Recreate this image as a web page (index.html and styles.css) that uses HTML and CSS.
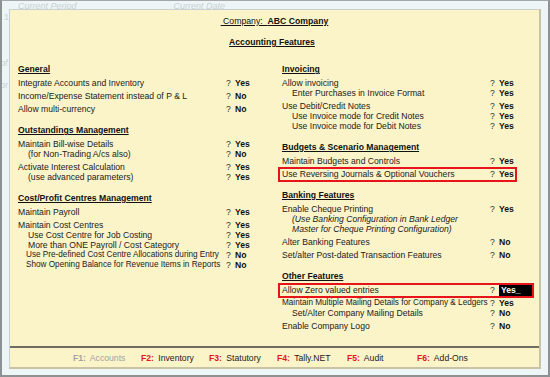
FILE: index.html
```html
<!DOCTYPE html>
<html lang="en">
<head>
  <meta charset="UTF-8">
  <title>Accounting Features</title>
  <link rel="stylesheet" href="styles.css">
</head>
<body>
  <div class="frame">
    <!-- faded screen behind the dialog -->
    <div class="behind-top">
      <span class="bt-period">Current Period</span>
      <span class="bt-date">Current Date</span>
    </div>

    <div class="middle">
      <div class="behind-left">
        <span class="bl-one">1</span>
        <span class="bl-of">of</span>
        <span class="bl-or">or</span>
      </div>

      <div class="panel">
        <div class="content">
          <div class="company"><span>&nbsp;Company:&nbsp; <b>ABC Company</b></span></div>
          <div class="title">Accounting Features</div>

          <div class="columns">
            <!-- Left column -->
            <div class="col">
              <div class="sec">
                <h3>General</h3>
                <div class="grp">
                  <div class="row"><span class="lbl">Integrate Accounts and Inventory</span><span class="q">?</span><span class="val">Yes</span></div>
                </div>
                <div class="grp">
                  <div class="row"><span class="lbl">Income/Expense Statement instead of P &amp; L</span><span class="q">?</span><span class="val">No</span></div>
                </div>
                <div class="grp">
                  <div class="row"><span class="lbl">Allow multi-currency</span><span class="q">?</span><span class="val">No</span></div>
                </div>
              </div>

              <div class="sec">
                <h3>Outstandings Management</h3>
                <div class="grp">
                  <div class="row"><span class="lbl">Maintain Bill-wise Details</span><span class="q">?</span><span class="val">Yes</span></div>
                  <div class="row sub"><span class="lbl">(for Non-Trading A/cs also)</span><span class="q">?</span><span class="val">No</span></div>
                </div>
                <div class="grp">
                  <div class="row"><span class="lbl">Activate Interest Calculation</span><span class="q">?</span><span class="val">Yes</span></div>
                  <div class="row sub"><span class="lbl">(use advanced parameters)</span><span class="q">?</span><span class="val">Yes</span></div>
                </div>
              </div>

              <div class="sec">
                <h3>Cost/Profit Centres Management</h3>
                <div class="grp">
                  <div class="row"><span class="lbl">Maintain Payroll</span><span class="q">?</span><span class="val">Yes</span></div>
                </div>
                <div class="grp">
                  <div class="row"><span class="lbl">Maintain Cost Centres</span><span class="q">?</span><span class="val">Yes</span></div>
                  <div class="row sub"><span class="lbl">Use Cost Centre for Job Costing</span><span class="q">?</span><span class="val">Yes</span></div>
                  <div class="row sub"><span class="lbl">More than ONE Payroll / Cost Category</span><span class="q">?</span><span class="val">Yes</span></div>
                  <div class="row sub sm"><span class="lbl">Use Pre-defined Cost Centre Allocations during Entry</span><span class="q">?</span><span class="val">No</span></div>
                  <div class="row sub sm"><span class="lbl">Show Opening Balance for Revenue Items in Reports</span><span class="q">?</span><span class="val">No</span></div>
                </div>
              </div>
            </div>

            <!-- Right column -->
            <div class="col">
              <div class="sec">
                <h3>Invoicing</h3>
                <div class="grp">
                  <div class="row"><span class="lbl">Allow invoicing</span><span class="q">?</span><span class="val">Yes</span></div>
                  <div class="row sub"><span class="lbl">Enter Purchases in Invoice Format</span><span class="q">?</span><span class="val">Yes</span></div>
                </div>
                <div class="grp">
                  <div class="row"><span class="lbl">Use Debit/Credit Notes</span><span class="q">?</span><span class="val">Yes</span></div>
                  <div class="row sub"><span class="lbl">Use Invoice mode for Credit Notes</span><span class="q">?</span><span class="val">Yes</span></div>
                  <div class="row sub"><span class="lbl">Use Invoice mode for Debit Notes</span><span class="q">?</span><span class="val">Yes</span></div>
                </div>
              </div>

              <div class="sec">
                <h3>Budgets &amp; Scenario Management</h3>
                <div class="grp">
                  <div class="row"><span class="lbl">Maintain Budgets and Controls</span><span class="q">?</span><span class="val">Yes</span></div>
                </div>
                <div class="grp">
                  <div class="row marked"><span class="lbl">Use Reversing Journals &amp; Optional Vouchers</span><span class="q">?</span><span class="val">Yes</span></div>
                </div>
              </div>

              <div class="sec">
                <h3>Banking Features</h3>
                <div class="grp">
                  <div class="row"><span class="lbl">Enable Cheque Printing</span><span class="q">?</span><span class="val">Yes</span></div>
                  <div class="note">(Use Banking Configuration in Bank Ledger</div>
                  <div class="note">Master for Cheque Printing Configuration)</div>
                </div>
                <div class="grp">
                  <div class="row"><span class="lbl">Alter Banking Features</span><span class="q">?</span><span class="val">No</span></div>
                </div>
                <div class="grp">
                  <div class="row"><span class="lbl">Set/alter Post-dated Transaction Features</span><span class="q">?</span><span class="val">No</span></div>
                </div>
              </div>

              <div class="sec">
                <h3>Other Features</h3>
                <div class="grp">
                  <div class="row marked active"><span class="lbl">Allow Zero valued entries</span><span class="q">?</span><span class="val field">Yes_</span></div>
                </div>
                <div class="grp">
                  <div class="row sm"><span class="lbl">Maintain Multiple Mailing Details for Company &amp; Ledgers</span><span class="q">?</span><span class="val">Yes</span></div>
                  <div class="row sub"><span class="lbl">Set/Alter Company Mailing Details</span><span class="q">?</span><span class="val">No</span></div>
                </div>
                <div class="grp">
                  <div class="row"><span class="lbl">Enable Company Logo</span><span class="q">?</span><span class="val">No</span></div>
                </div>
              </div>
            </div>
          </div>
        </div>

        <div class="keys">
          <span class="key off"><b>F1:</b> Accounts</span>
          <span class="key"><b>F2:</b> Inventory</span>
          <span class="key"><b>F3:</b> Statutory</span>
          <span class="key wide"><b>F4:</b> Tally.NET</span>
          <span class="key wide"><b>F5:</b> Audit</span>
          <span class="key"><b>F6:</b> Add-Ons</span>
        </div>
      </div>
    </div>
  </div>
</body>
</html>
```

FILE: styles.css
```css
* {
  margin: 0;
  padding: 0;
  box-sizing: border-box;
}

body {
  font-family: "Liberation Sans", Arial, sans-serif;
  font-size: 8.65px;
  color: #222;
  background: #eef5f6;
}

/* Outer window */
.frame {
  width: 550px;
  height: 377px;
  background: #eef5f6;
  border: 2px solid #8e9191;
  border-top: 1px solid #a4a8a8;
  display: flex;
  flex-direction: column;
  overflow: hidden;
}

.behind-top {
  height: 8px;
  overflow: hidden;
  display: flex;
  font-size: 9px;
  font-style: italic;
  line-height: 11px;
  color: #c7d1d3;
  padding-left: 16px;
}

.bt-date {
  margin-left: 97px;
}

.middle {
  display: flex;
  flex: 1;
}

.behind-left {
  width: 7px;
  overflow: hidden;
  display: flex;
  flex-direction: column;
  color: #c7d1d3;
  font-size: 9px;
  line-height: 10px;
  padding-left: 2px;
}

.bl-one { margin-top: 3px; }
.bl-of { margin-top: 36px; margin-left: -4px; font-style: italic; }
.bl-or { margin-top: 12px; margin-left: -4px; }

/* Dialog panel */
.panel {
  width: 532px;
  height: 360px;
  background: #fbf4c8;
  border-left: 1px solid #c9d0cf;
  border-top: 1px solid #c9d0cf;
  border-right: 2px solid #c9c3a6;
  border-bottom: 2px solid #c9c3a6;
  display: flex;
  flex-direction: column;
}

.content {
  flex: 1;
  padding-top: 5px;
}

.company {
  text-align: center;
  line-height: 12px;
  font-size: 8.7px;
  color: #111;
}

.company span {
  text-decoration: underline;
  white-space: pre;
}

.title {
  text-align: center;
  font-weight: bold;
  text-decoration: underline;
  line-height: 12px;
  margin-top: 9px;
  color: #111;
  padding-right: 5px;
}

.columns {
  display: grid;
  grid-template-columns: 264px 1fr;
  padding-left: 8px;
  margin-top: 16px;
}

.sec + .sec {
  margin-top: 11px;
}

.sec h3 {
  font-size: 8.65px;
  font-weight: bold;
  text-decoration: underline;
  line-height: 10px;
  margin-bottom: 4px;
  color: #111;
}

.grp + .grp {
  margin-top: 3px;
}

.row {
  display: flex;
  line-height: 10px;
  white-space: nowrap;
  position: relative;
}

.lbl {
  width: 208px;
  flex: none;
}

.sub .lbl {
  padding-left: 10px;
}

.sm .lbl {
  font-size: 8.2px;
}

.sub.sm .lbl {
  padding-left: 8px;
}

.q {
  width: 9px;
  flex: none;
  color: #333;
}

.val {
  font-weight: bold;
  color: #111;
}

.note {
  font-style: italic;
  line-height: 10px;
  padding-left: 10px;
  white-space: nowrap;
}

/* Highlighted rows */
.marked {
  width: 232px;
}

.marked::after {
  content: "";
  position: absolute;
  top: -2px;
  bottom: -3px;
  left: -4px;
  right: -3px;
  border: 2px solid #e8141b;
}

.marked.active {
  width: 250px;
}

.marked.active::after {
  right: -2px;
}

.field {
  flex: 1;
  background: #000;
  color: #fff;
  padding-left: 2px;
  margin-top: -1px;
  margin-bottom: -1px;
  line-height: 12px;
}

/* Function keys bar */
.keys {
  height: 21px;
  border-top: 2px solid #6f6d62;
  display: flex;
  padding: 4px 0 0 63px;
  line-height: 12px;
}

.key {
  width: 68px;
  white-space: nowrap;
  color: #222;
}

.key.wide {
  width: 70px;
}

.key b {
  color: #e8141b;
  margin-right: 2px;
}

.key.off,
.key.off b {
  color: #a3a3a3;
}
```
